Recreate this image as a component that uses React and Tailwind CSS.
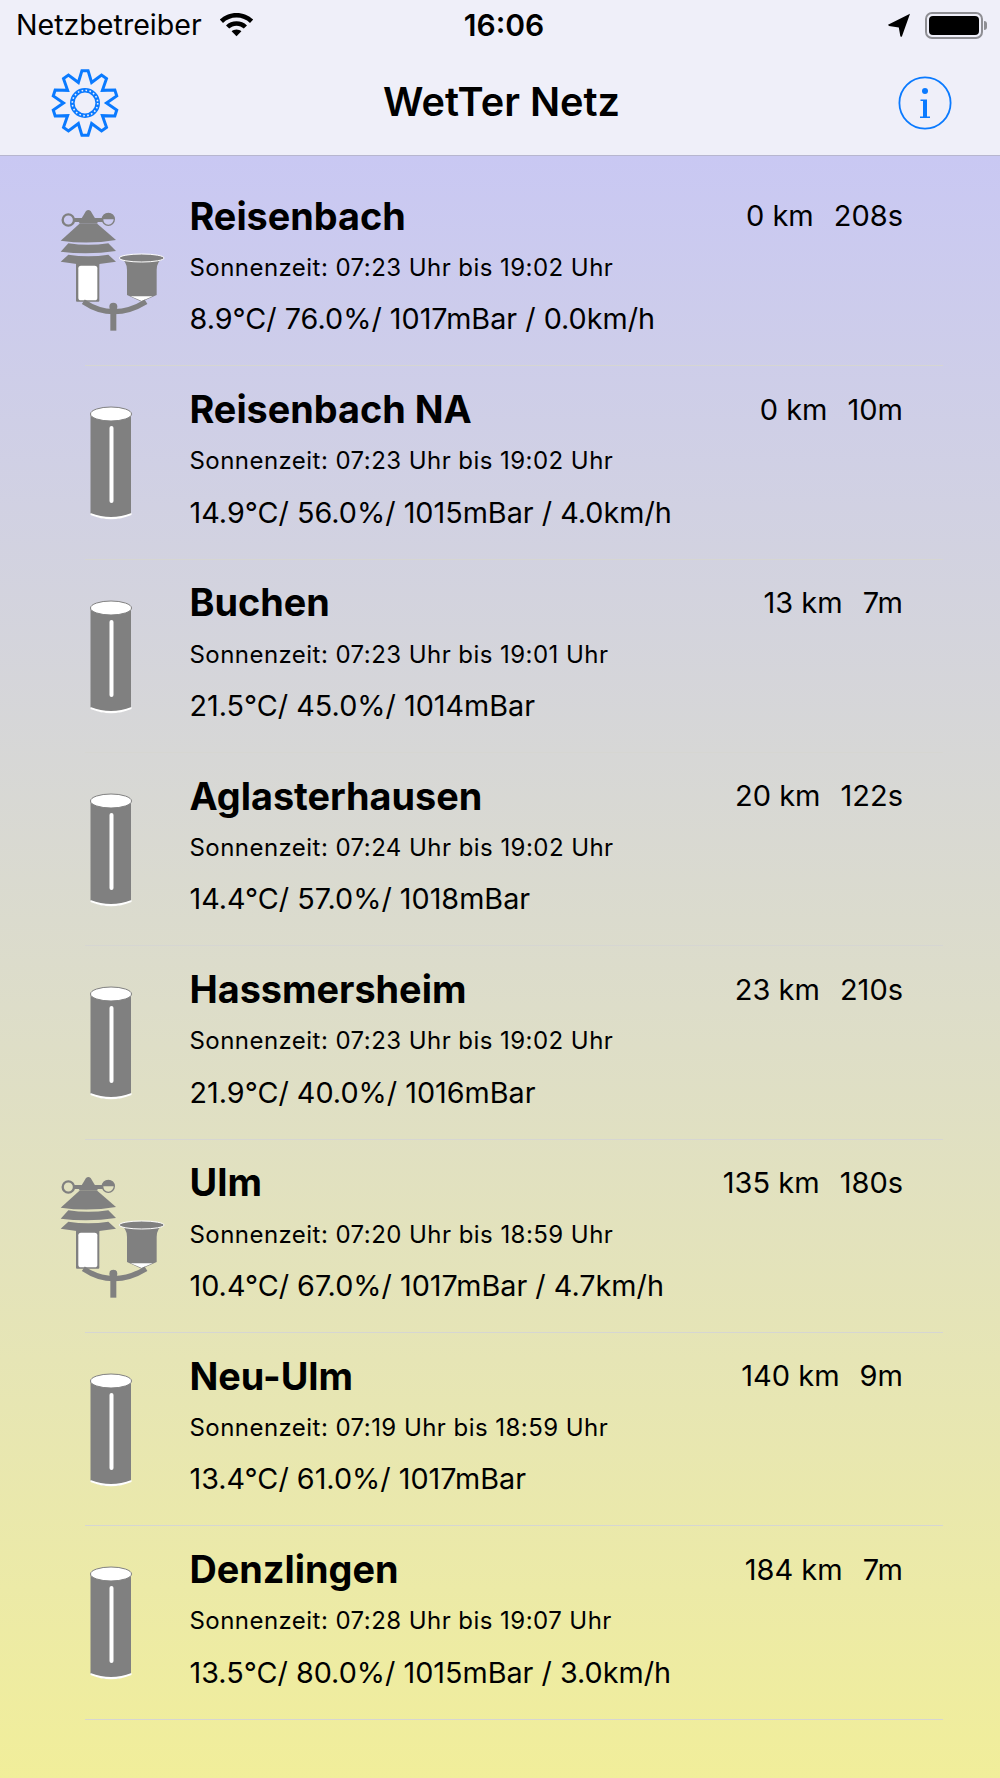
import React from 'react';

const stations = [
  { name: 'Reisenbach', dist: '0 km', age: '208s', sun: 'Sonnenzeit: 07:23 Uhr bis 19:02 Uhr', data: '8.9°C/ 76.0%/ 1017mBar / 0.0km/h', full: true },
  { name: 'Reisenbach NA', dist: '0 km', age: '10m', sun: 'Sonnenzeit: 07:23 Uhr bis 19:02 Uhr', data: '14.9°C/ 56.0%/ 1015mBar / 4.0km/h' },
  { name: 'Buchen', dist: '13 km', age: '7m', sun: 'Sonnenzeit: 07:23 Uhr bis 19:01 Uhr', data: '21.5°C/ 45.0%/ 1014mBar' },
  { name: 'Aglasterhausen', dist: '20 km', age: '122s', sun: 'Sonnenzeit: 07:24 Uhr bis 19:02 Uhr', data: '14.4°C/ 57.0%/ 1018mBar' },
  { name: 'Hassmersheim', dist: '23 km', age: '210s', sun: 'Sonnenzeit: 07:23 Uhr bis 19:02 Uhr', data: '21.9°C/ 40.0%/ 1016mBar' },
  { name: 'Ulm', dist: '135 km', age: '180s', sun: 'Sonnenzeit: 07:20 Uhr bis 18:59 Uhr', data: '10.4°C/ 67.0%/ 1017mBar / 4.7km/h', full: true },
  { name: 'Neu-Ulm', dist: '140 km', age: '9m', sun: 'Sonnenzeit: 07:19 Uhr bis 18:59 Uhr', data: '13.4°C/ 61.0%/ 1017mBar' },
  { name: 'Denzlingen', dist: '184 km', age: '7m', sun: 'Sonnenzeit: 07:28 Uhr bis 19:07 Uhr', data: '13.5°C/ 80.0%/ 1015mBar / 3.0km/h' },
];

// 10 tooth gear outline, center 34/34
const gearPoints = () => {
  const pts = [];
  const teeth = 10;
  const step = (2 * Math.PI) / teeth;
  for (let i = 0; i < teeth; i++) {
    const a = i * step - Math.PI / 2;
    [[-0.5, 21.5], [-0.15, 32.5], [0.15, 32.5]].forEach(([o, r]) => {
      pts.push(`${(34 + r * Math.cos(a + o * step)).toFixed(2)},${(34 + r * Math.sin(a + o * step)).toFixed(2)}`);
    });
  }
  return pts.join(' ');
};

const Gear = () => (
  <svg width="68" height="68" viewBox="0 0 68 68" fill="none">
    <polygon points={gearPoints()} stroke="#0a7aff" strokeWidth="3" strokeLinejoin="miter" />
    <circle cx="34" cy="34" r="12.7" stroke="#0a7aff" strokeWidth="4.6" />
    <circle cx="34" cy="34" r="12.7" stroke="#efeff9" strokeWidth="1.6" strokeDasharray="1.6 2.4" />
  </svg>
);

const InfoIcon = () => (
  <svg width="54" height="54" viewBox="0 0 54 54">
    <circle cx="27" cy="27" r="25.6" fill="none" stroke="#0a7aff" strokeWidth="1.8" />
    <circle cx="27" cy="15" r="3" fill="#0a7aff" />
    <path d="M22.500 23.500h6.500v17h3v1.500H22v-1.500h3v-15.500h-2.500z" fill="#0a7aff" />
  </svg>
);

const WifiIcon = () => (
  <svg width="35" height="25" viewBox="0 0 35 25" fill="#000">
    <path d="M17.5 1C11 1 5.2 3.5 .8 7.6l3.2 3.3c3.6-3.3 8.3-5.3 13.5-5.3s9.9 2 13.5 5.3l3.2-3.3C29.8 3.5 24 1 17.5 1z" />
    <path d="M17.5 9.3c-4 0-7.7 1.5-10.5 4.1l3.2 3.2c2-1.7 4.5-2.8 7.3-2.8s5.3 1.1 7.3 2.8l3.2-3.2c-2.8-2.6-6.5-4.1-10.5-4.1z" />
    <path d="M17.5 17.4c-1.9 0-3.6.7-4.9 1.8l4.9 5 4.9-5c-1.3-1.1-3-1.8-4.9-1.8z" />
  </svg>
);

const LocationIcon = () => (
  <svg width="24" height="24" viewBox="0 0 24 24" fill="#000">
    <path d="M23 .8 1 11.8l1 1.2 9.8 1.4 1.6 9 1.4.3z" />
  </svg>
);

const Battery = () => (
  <div className="flex items-center">
    <div className="w-[58px] h-[27px] rounded-[7px] border-2 border-[#8e8e93] p-[2px]">
      <div className="w-full h-full rounded-[4px] bg-black" />
    </div>
    <div className="w-[3px] h-[9px] ml-[1px] rounded-r-sm bg-[#8e8e93]" />
  </div>
);

// drawn in the coordinates of a 3x crop
const WeatherStation = () => (
  <svg width="150" height="160" viewBox="0 0 450 480" className="mt-[17px]">
    <g fill="#808080">
      <circle cx="85" cy="90" r="17" fill="none" stroke="#808080" strokeWidth="7" />
      <circle cx="205" cy="88" r="18" fill="none" stroke="#808080" strokeWidth="4" />
      <path d="M187 88a18 18 0 0 1 36 0z" />
      <rect x="100" y="84" width="90" height="12" />
      <path d="M116 100 138 63q7-6 14 0l22 37z" />
      <path d="M120 100h50l58 50q-83 14-166 2z" />
      <path d="M85 160q60 9 120 0l23 23q-83 12-166 2z" />
      <path d="M85 194q60 9 120 0l23 21-50 7h-68l-48-7z" />
      <rect x="108" y="220" width="70" height="115" rx="3" />
      <rect x="115" y="227" width="57" height="104" rx="8" fill="#fff" />
      <path d="M240 205q20 6 21 35v75l44 20 45-20v-75q1-29 21-35z" />
      <path d="M272 319h66l-33 14z" fill="#fff" />
      <ellipse cx="305" cy="204" rx="67" ry="12" stroke="#fff" strokeWidth="3" />
      <path d="M130 335q90 60 188 0" fill="none" stroke="#808080" strokeWidth="16" />
      <rect x="211" y="350" width="18" height="72" />
      <circle cx="220" cy="350" r="12" />
    </g>
  </svg>
);

const Cylinder = () => (
  <svg width="90" height="150" viewBox="0 0 90 150" className="mt-[24px] ml-[30px]">
    <path d="M20.500 24h40.500v100q-20.500 10-40.500 0z" fill="#808080" />
    <ellipse cx="41" cy="24" rx="20.500" ry="7" fill="#fff" stroke="#808080" strokeWidth="1" />
    <path d="M20.500 123q20.500 8 41 0v2q-20.500 8.500-41 0z" fill="#fff" />
    <rect x="39.500" y="36" width="4" height="77" rx="2" fill="#fff" />
  </svg>
);

const StationRow = ({ station }) => (
  <div>
    <div className="flex h-[192.33px] pl-[40px] pr-[97px] overflow-hidden">
      <div className="w-[149.500px] shrink-0">
        {station.full ? <WeatherStation /> : <Cylinder />}
      </div>
      <div className="flex-1 flex flex-col text-black">
        <div className="flex justify-between mt-[21px] h-[44px] items-center">
          <span className="text-[37.800px] font-bold">{station.name}</span>
          <span className="flex gap-[20px] text-[29px]">
            <span>{station.dist}</span>
            <span>{station.age}</span>
          </span>
        </div>
        <div className="mt-[15px] h-[30px] flex items-center text-[24px] tracking-[0.45px]">{station.sun}</div>
        <div className="mt-[19px] h-[34px] flex items-center text-[28.750px]">{station.data}</div>
      </div>
    </div>
    <div className="ml-[85px] mr-[57px] h-px bg-[#d6d6d2]" />
  </div>
);

export default function App() {
  return (
    <div className="w-[1000px] h-[1778px] overflow-hidden flex flex-col font-['Inter',sans-serif]">
      <div className="h-[156px] shrink-0 bg-[#efeff9] border-b border-[#b7b6cf] flex flex-col">
        <div className="h-[50px] flex items-center justify-between pl-[16px] pr-[13px] relative">
          <div className="flex items-center gap-[17px]">
            <span className="text-[28.600px] text-black">Netzbetreiber</span>
            <WifiIcon />
          </div>
          <span className="absolute left-[8px] right-0 text-center text-[30px] font-semibold text-black">16:06</span>
          <div className="flex items-center gap-[14px]">
            <LocationIcon />
            <Battery />
          </div>
        </div>
        <div className="flex-1 grid grid-cols-[1fr_auto_1fr] items-center pl-[51px] pr-[48px]">
          <Gear />
          <span className="text-[39.700px] font-semibold text-black">WetTer Netz</span>
          <div className="flex justify-end">
            <InfoIcon />
          </div>
        </div>
      </div>
      <div className="flex-1 pt-[17px] bg-gradient-to-b from-[#c9c8f3] to-[#f1ee9a]">
        {stations.map((station) => (
          <StationRow key={station.name} station={station} />
        ))}
      </div>
    </div>
  );
}
